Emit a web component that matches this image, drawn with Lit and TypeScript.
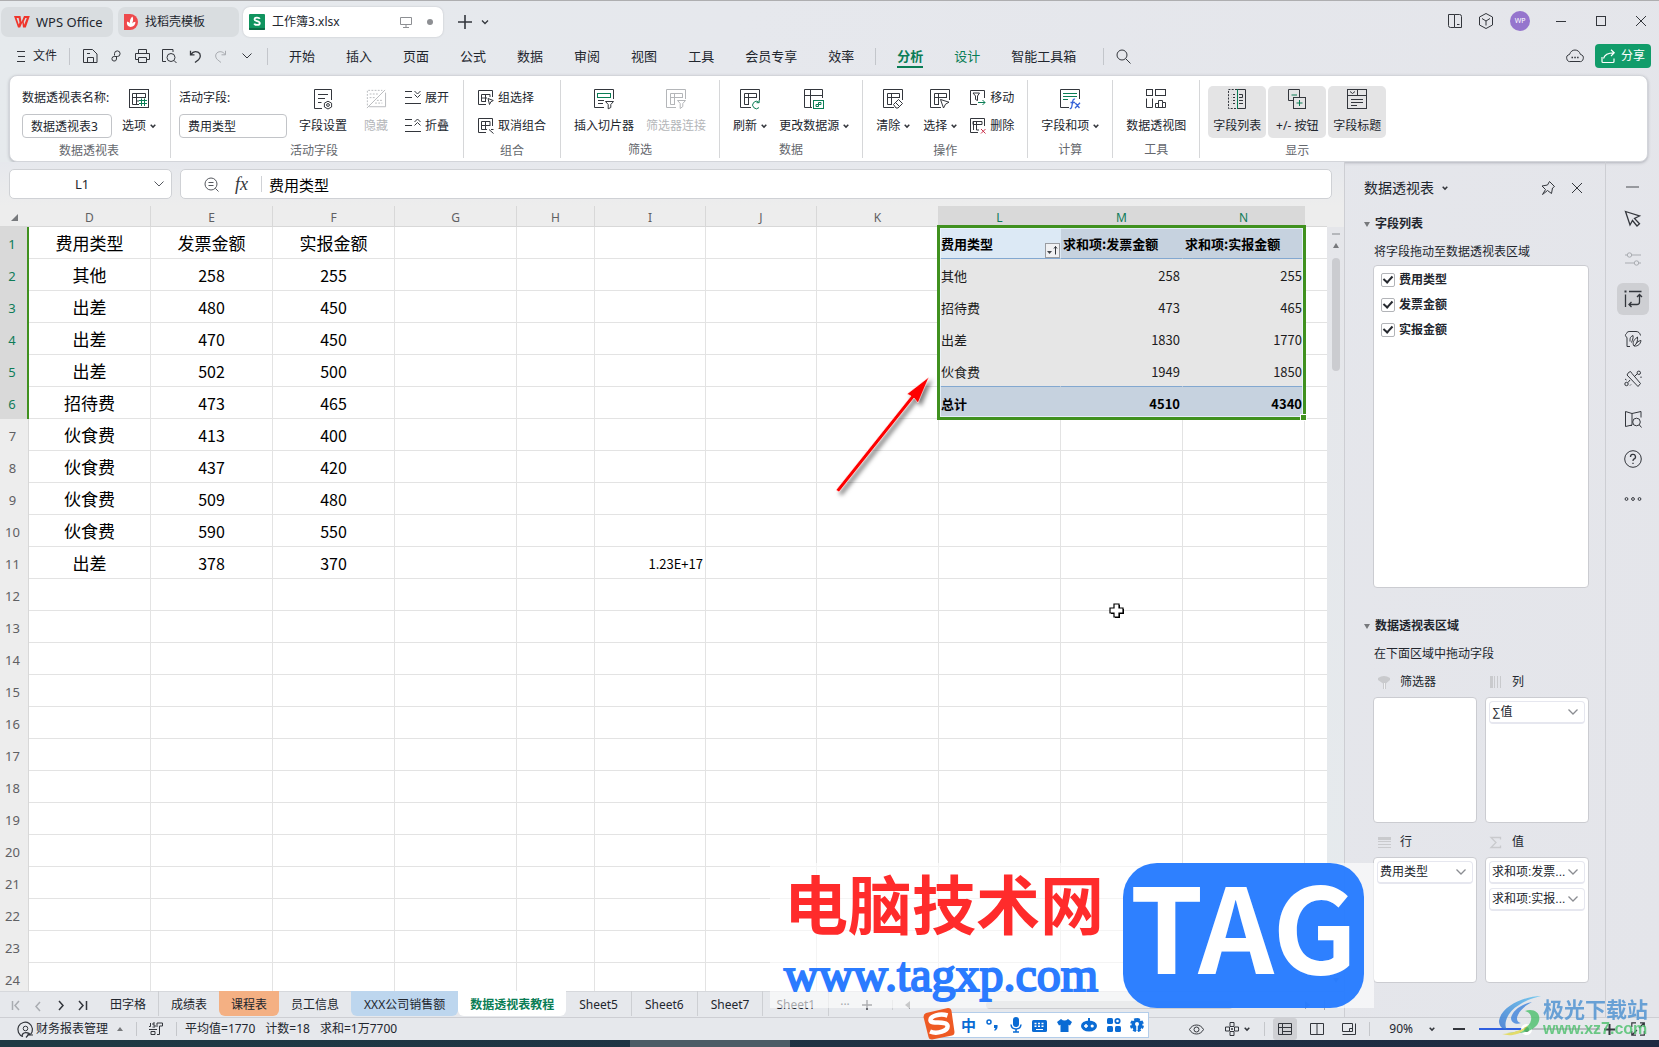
import { LitElement, html, css, svg, nothing, TemplateResult, SVGTemplateResult } from "lit";
import { customElement } from "lit/decorators.js";
import { classMap } from "lit/directives/class-map.js";

const icon = (size: number, body: SVGTemplateResult, cls = "") =>
  html`<svg class="ico ${cls}" width=${size} height=${size} viewBox="0 0 ${size} ${size}" aria-hidden="true">${body}</svg>`;

const chevron = html`<svg class="ico" width="6" height="6" viewBox="0 0 6 6" aria-hidden="true"><path d="M.7 1.8 3 4.1 5.3 1.8" stroke-width="1.5" /></svg>`;
const chevronWide = html`<svg class="ico" width="10" height="8" viewBox="0 0 10 8" aria-hidden="true"><path d="M.5 1.5 5 6 9.5 1.5" /></svg>`;

/* 20px ribbon icons */
const tableFrame = svg`<path d="M11 18.5H.5V.5H19.5V11"/><path d="M16.5 9V4.5H4.5V15.5H9M4.5 8.5H16.5M8.5 4.5V15.5"/>`;
const big = {
  options: icon(20, svg`<rect x=".5" y=".5" width="19" height="18"/><path d="M10 15.5H3.5V4.5H16.5V9M3.5 8.5H16.5M7.5 4.5V15.5M7.5 12H10"/><path class="g" d="M12.5 9.5V17M15.5 9.5V17M10 11.5H18M10 14.5H18"/>`),
  fieldSet: icon(20, svg`<path d="M9 19.5H1.5V.5H18.5V11M5 5.5H15M5 9.5H12M5 13.5H8.5"/><path d="M15 12.2 18.6 14.2V18L15 20 11.4 18V14.2Z"/><circle cx="15" cy="16" r="1.4"/>`),
  hide: icon(22, svg`<path stroke-dasharray="2 1.5" d="M1.5 18V1.5H18"/><path d="M21.5 4V19.5H3.5"/><path d="M1 21 21 1"/><path stroke-dasharray="2 1.5" d="M4 5.5H14M4 9.5H10M12 12.5H18M10 15.5H18"/>`),
  slicer: icon(20, svg`<path d="M10 18.5H.5V.5H19.5V10M4 11.5H10M4 14.5H9"/><rect class="g" x="3.5" y="4.5" width="13" height="4"/><path d="M11.5 12.5H19.5L16.8 15.5V18.5L14.2 19.8V15.5Z"/>`),
  filterLink: icon(20, svg`<path d="M10 18.5H.5V.5H19.5V10"/><path d="M16.5 9V4.5H4.5V15.5H9M4.5 8.5H16.5M8.5 4.5V15.5"/><path d="M11.5 11.5H19.5L16.8 14.5V17.5L14.2 19.5V14.5Z"/>`),
  refresh: icon(20, svg`${tableFrame}<path class="g" d="M19 18.6A3.7 3.7 0 1 1 18.8 13.2M19.2 11V13.7H16.5"/>`),
  source: icon(20, svg`<path d="M8 18.5H.5V.5H18.5V9M.5 6.5H18.5M6.5 .5V18.5"/><g class="g"><rect x="9.5" y="11.5" width="10" height="8"/><path d="M12 17.5V15.5H14.5V17.5ZM14.5 15.5V13.5H17V15.5Z"/></g>`),
  clear: icon(20, svg`${tableFrame}<path fill="#fff" d="M10.5 15.5 15.5 10.5 19.5 14.5 15 19H13Z"/><path d="M12.5 13.5 16.5 17.5"/>`),
  select: icon(20, svg`${tableFrame}<path fill="#fff" d="M10.5 10.5 19 13.2 15.5 15.2 13.5 19Z"/>`),
  fieldItem: icon(20, svg`<path d="M9 18.5H.5V.5H19.5V10"/><path class="g" d="M3 4.5H17M3 7.5H17M3 10.5H8"/><g class="b"><path d="M15 10.2C13.4 9.6 13 11 12.7 12.5L11.8 17.5C11.5 19 11 19.8 9.8 19.4M10.5 13.5H15M15.3 14 19.5 19M20 13.8 15 19.2"/></g>`),
  chart: icon(20, svg`<rect x=".5" y=".5" width="6" height="6"/><rect x="9.5" y=".5" width="10" height="6"/><path d="M6.5 9.5V18.5H.5V9.5M9.5 18.5V14.5H12.5V11.5H16.5V13.5H19.5V18.5ZM12.5 14V18.5M16.5 13.5V18.5"/>`),
  fieldList: icon(20, svg`<g stroke-dasharray="2 1.3"><path d="M10 .5H1.5V19.5H10"/><path d="M8 5.5H4.5M8 8.5H4.5M8 11.5H4.5M8 14.5H4.5"/></g><path d="M10 .5H18.5V19.5H10M12 5.5H15.5V8.5H12M12 11.5H16M12 14.5H16"/><path class="g" d="M10.5 0V20"/>`),
  plusMinus: icon(20, svg`<path d="M6 11.5H1.5V.5H12.5V8"/><rect x="6.5" y="8.5" width="12" height="11"/><path class="g" d="M4.5 6H10M12.5 11V17M9.5 14H15.5"/>`),
  fieldTitle: icon(20, svg`<rect x=".5" y=".5" width="19" height="19"/><path d="M.5 6.5H19.5M10.5 .5V6.5M3 2.5 5.5 4.5 8 2.5M4 10.5H16M4 13.5H16M4 16.5H10"/>`),
};

/* 16px ribbon icons */
const small = {
  expand: icon(16, svg`<path d="M0 1.5H7M0 7.5H7M0 13.5H16M9.5 1 12.5 4 15.5 1M9.5 4.5 12.5 7.5 15.5 4.5"/>`),
  collapse: icon(16, svg`<path d="M0 1.5H7M0 7.5H7M0 13.5H16M9.5 4 12.5 1 15.5 4M9.5 7.5 12.5 4.5 15.5 7.5"/>`),
  group: icon(16, svg`<path d="M8 14.5H.5V.5H14.5V7M3.5 4.5H12V7M3.5 4.5V11.5H8M3.5 8H9M7.5 4.5V11.5"/><path d="M10 8.5 15.3 10.5 12.8 11.8 11.5 14.5Z"/>`),
  ungroup: icon(16, svg`<path d="M8 14.5H.5V.5H14.5V8M3.5 3.5H12V8M3.5 3.5V11.5H9M3.5 7.5H12M7.5 3.5V11.5"/><path d="M11 11.5 15.5 15.5M15.5 11.5H13"/>`),
  move: icon(16, svg`<path d="M7 14.5H.5V.5H14.5V8M3 3H9.5L7.5 6V10.5L5.5 9.5V6Z"/><path class="g" d="M8 12.5H15M12.5 10 15 12.5 12.5 15"/>`),
  remove: icon(16, svg`<path d="M8 14.5H.5V.5H14.5V8M3 3.5H12V6.5H3ZM3.5 3.5V12M6.5 3.5V12H9"/><path class="r" d="M11 11 15.5 15.5M15.5 11 11 15.5"/>`),
};

const quick: [string, TemplateResult][] = [
  ["保存", icon(15, svg`<path d="M.5 13.5V.5H9.5L14 5V13.5ZM4.500 13.5V8.5H10.5V13.5M4 4.5H7"/>`)],
  ["输出", icon(13, svg`<path d="M4.5 5.5V3.5A2.8 2.8 0 1 1 7.3 6.5H4.5A2.3 2.3 0 1 0 6.5 9V6.5"/>`)],
  ["打印", icon(15, svg`<path d="M3.5 4V.5H11.5V4M3.5 10.5H.5V4.5H14.5V10.5H11.5M3.5 8.5H11.5V13.5H3.5Z"/>`)],
  ["打印预览", icon(15, svg`<path d="M4 12.5H.5V.5H11V3"/><circle cx="9" cy="8.5" r="4"/><path d="M12 11.5 14.5 14"/>`)],
  ["撤销", icon(13, svg`<path stroke-width="1.3" d="M1.5 .8V4.8H5.5M1.8 4.6C3.5 2 6.5 1 9 2.2C12.5 4 11.5 8 9.5 9.7L6 12.5"/>`)],
  ["恢复", icon(13, svg`<path d="M11.5 .8V4.8H7.5M11.2 4.6C9.5 2 6.5 1 4 2.2C.5 4 1.5 8 3.5 9.7L7 12.5"/>`, "dim")],
];

const rail: [string, TemplateResult][] = [
  ["选择", icon(18, svg`<path stroke-width="1.3" d="M1.5 1.5 15.5 6 10.5 8.5 15.5 13.8 13 16 8.5 10.5 6 15Z"/>`)],
  ["属性", icon(18, svg`<path d="M1 5H3M8 5H17M1 13H10M15 13H17"/><circle cx="5.5" cy="5" r="2.2"/><circle cx="12.5" cy="13" r="2.2"/>`, "dim")],
  ["数据透视表", icon(18, svg`<path stroke-width="1.3" d="M1.5 4.5V17M5 1.5H17.5M5 14.5H13Q15.5 14.5 15.5 12V5M13 7 15.5 4.5 18 7M7.5 12 5 14.5 7.5 17"/><path d="M.5 1.5H2.5" stroke-width="2"/>`)],
  ["模板", icon(18, svg`<path d="M6 16.5H3V7.5C1 6.500 1 4.5 2.5 3.5C3 1.5 5 1.5 6 1.5H12C14.5 1.5 16 3 16.5 5.5"/><path d="M6 11.5C6 8 6 7 9 5.5C9.5 8 8.5 10 7.5 12.5M10 16C8 13 9.5 10 13.5 7C14 10 13 14 10 16ZM10 16C14 16.5 16.5 14 17 10.5C14.5 11 13 12 12.5 13.5"/>`)],
  ["工具", icon(18, svg`<path d="M4.500 2.5 6.5 1.5 8 3.5L16.5 13.5 14 16.5 3 5Z"/><path d="M10.5 6.5 13 4M6 10 4 12.5"/><circle cx="14.8" cy="2.8" r="1.7"/><circle cx="2.5" cy="14" r="1.7"/><path d="M1 9 2.5 10M6 15.5 7 14.5M17 6.5V8"/>`)],
  ["查找", icon(18, svg`<path d="M8 3.5V15L1.5 16.5V1.5L8 3.5 17 1.5V7.5M8 15.5H6"/><circle cx="12.5" cy="12" r="3.8"/><path d="M15.3 14.8 17.5 17.5"/>`)],
  ["帮助", icon(18, svg`<circle cx="9" cy="9" r="8.3"/><path stroke-width="1.3" d="M6.5 7A2.500 2.500 0 1 1 9.8 9.2Q9 9.6 9 11M9 12.7V14"/>`)],
  ["更多", icon(18, svg`<circle cx="2.500" cy="9" r="1.400"/><circle cx="9" cy="9" r="1.400"/><circle cx="15.500" cy="9" r="1.400"/>`)],
];

const columns = ["D", "E", "F", "G", "H", "I", "J", "K", "L", "M", "N", ""];

const source: [string, string, string][] = [
  ["费用类型", "发票金额", "实报金额"],
  ["其他", "258", "255"],
  ["出差", "480", "450"],
  ["出差", "470", "450"],
  ["出差", "502", "500"],
  ["招待费", "473", "465"],
  ["伙食费", "413", "400"],
  ["伙食费", "437", "420"],
  ["伙食费", "509", "480"],
  ["伙食费", "590", "550"],
  ["出差", "378", "370"],
];

const pivot: [string, string, string][] = [
  ["费用类型", "求和项:发票金额", "求和项:实报金额"],
  ["其他", "258", "255"],
  ["招待费", "473", "465"],
  ["出差", "1830", "1770"],
  ["伙食费", "1949", "1850"],
  ["总计", "4510", "4340"],
];

const menuMain = ["开始", "插入", "页面", "公式", "数据", "审阅", "视图", "工具", "会员专享", "效率"];

const sheets: [string, string][] = [
  ["田字格", "line"],
  ["成绩表", ""],
  ["课程表", "orange"],
  ["员工信息", ""],
  ["XXX公司销售额", "blue roomy"],
  ["数据透视表教程", "active"],
  ["Sheet5", "line roomy"],
  ["Sheet6", "line roomy"],
  ["Sheet7", "line roomy"],
  ["Sheet1", "line roomy"],
];

const shared = css`
  * { box-sizing: border-box; }
  :host { font-family: "Noto Sans", "Noto Sans CJK SC", sans-serif; font-size: 12px; line-height: 16px; color: #22262e; }
  button, input { font: inherit; color: inherit; margin: 0; }
  button { border: 0; background: none; padding: 0; display: inline-flex; align-items: center; justify-content: center; white-space: nowrap; }
  a { color: inherit; text-decoration: none; }
  .ico { display: block; flex: none; fill: none; stroke: #33363c; stroke-width: 1; overflow: visible; }
  .ico .g { stroke: #0a7d55; }
  .ico .b { stroke: #3763d8; stroke-width: 1.3; }
  .ico .r { stroke: #c9304a; }
  .dim { stroke: #a9acb1; }
`;

@customElement("title-bar")
class TitleBar extends LitElement {
  static styles = [shared, css`
    :host { display: flex; align-items: flex-start; border-top: 1px solid #aeaeb0; height: 39px; padding: 6px 12px 0 1px; }
    .tab { height: 30px; border-radius: 7px; background: #d9dde0; display: flex; align-items: center; justify-content: flex-start; font-size: 12px; }
    .home { width: 112px; padding-left: 13px; gap: 6px; margin-right: 5px; font-size: 13px; }
    .docer { width: 121px; padding-left: 6px; gap: 7px; margin-right: 4px; }
    .book { width: 200px; padding: 0 10px 0 6px; gap: 7px; background: #fff; box-shadow: 0 0 2px #b9bcc2; }
    .grow { flex: 1; text-align: left; }
    .dot { width: 6px; height: 6px; border-radius: 3px; background: #8d8f93; margin-left: 8px; }
    .add { margin-left: 15px; height: 30px; gap: 9px; display: flex; align-items: center; }
    .right { margin-left: auto; display: flex; align-items: center; gap: 16px; height: 28px; }
    .avatar { width: 20px; height: 20px; border-radius: 10px; background: #9575cd; color: #fff; font-size: 7px; }
    .win { display: flex; gap: 28px; margin-left: 9px; }
  `];
  render() {
    return html`
      <button class="tab home">
        <svg class="ico" width="16" height="12" viewBox="0 0 16 12" aria-hidden="true"><path fill="#f0352b" stroke="none" d="M0 0H6.500L7.500 6 10 0H15.800L11.800 11.500H9L8.300 6.500 6.200 11.500H4ZM2.600 2 4.800 8.500 5.500 6.500 4.600 2ZM11.300 2 9.700 5.800 10.200 8.800 12.800 2Z"/></svg>
        WPS Office</button>
      <button class="tab docer">
        <svg class="ico" width="14" height="16" viewBox="0 0 14 16" aria-hidden="true"><path fill="#ee4a4d" stroke="none" d="M0 0H6A8 8 0 0 1 6 16H0Z"/><path fill="#fff" stroke="none" d="M6.5 13C3.5 12.5 2.5 10.5 3 7.5C4.5 8 5.5 8.5 6 9.5C5.5 6.5 6.5 4 8.5 2.5C9.5 5 9.3 7 8 9.5C9 8.5 9.8 8 11.5 7.8C11.5 10.8 9.5 12.8 6.5 13Z"/></svg>
        <span class="grow">找稻壳模板</span></button>
      <button class="tab book">
        <svg class="ico" width="16" height="16" viewBox="0 0 16 16" aria-hidden="true"><rect width="16" height="16" rx="1" fill="#10945f" stroke="none"/><path d="M0 14H16V15A1 1 0 0 1 15 16H1A1 1 0 0 1 0 15Z" fill="#0b6b45" stroke="none"/><path stroke="#fff" stroke-width="1.8" d="M10.8 4.8C10 3.2 5.5 3 5.5 5.3C5.5 7.6 10.8 6.6 10.8 9.2C10.8 11.4 6 11.5 5.2 9.6"/></svg>
        <span class="grow">工作簿3.xlsx</span>
        <svg class="ico dim" width="12" height="12" viewBox="0 0 12 12" aria-hidden="true"><path stroke="#8d8f93" d="M.5 1.5H11.500V8.5H.5ZM3 11.5H9M6 8.5V11.5"/></svg>
        <span class="dot"></span></button>
      <div class="add">
        <button aria-label="新建">${icon(14, svg`<path stroke-width="1.6" d="M7 0V14M0 7H14"/>`)}</button>
        <button aria-label="更多">${icon(8, svg`<path stroke-width="1.3" d="M1 2.5 4 5.5 7 2.5"/>`)}</button>
      </div>
      <div class="right">
        <button aria-label="并排">${icon(14, svg`<path d="M6.500 13.5H2.500A2 2 0 0 1 .5 11.500V.5H6.500ZM6.500 .5H11.500A2 2 0 0 1 13.500 2.500V13.500H6.500M9 10.500H11.500"/>`)}</button>
        <button aria-label="组件">${icon(16, svg`<path d="M8 .5 14.5 4V12L8 15.5 1.5 12V4ZM4 5.5 8 8 12 5.5M8 8V12.5"/>`)}</button>
        <button class="avatar">WP</button>
        <div class="win">
          <button aria-label="最小化">${icon(12, svg`<path d="M1 6.5H11"/>`)}</button>
          <button aria-label="最大化">${icon(12, svg`<rect x="1.5" y="1.5" width="9" height="9"/>`)}</button>
          <button aria-label="关闭">${icon(12, svg`<path d="M1 1 11 11M11 1 1 11"/>`)}</button>
        </div>
      </div>`;
  }
}

@customElement("menu-bar")
class MenuBar extends LitElement {
  static styles = [shared, css`
    :host { display: flex; align-items: center; height: 34px; padding: 0 8px 0 17px; font-size: 13px; }
    .file { gap: 8px; font-size: 12px; }
    .sep { width: 1px; height: 17px; background: #c3c6cb; }
    .quick { display: flex; align-items: center; gap: 12px; margin: 0 15px 0 13px; }
    .custom { margin-left: 3px; }
    .file + .sep { margin-left: 12px; }
    nav { display: flex; gap: 31px; margin: 0 21px; }
    nav a { display: block; line-height: 20px; border-bottom: 2px solid transparent; border-top: 2px solid transparent; }
    .tail { margin-right: 27px; }
    nav .on { color: #0a7d55; font-weight: 700; border-bottom-color: #0a7d55; }
    .green { color: #0a7d55; }
    .find { margin-left: 12px; }
    .cloud { margin-left: auto; }
    .share { margin-left: 12px; width: 56px; height: 24px; border-radius: 4px; background: #119c6a; color: #fff; gap: 5px; font-size: 12px; }
    .share .ico { stroke: #fff; }
  `];
  render() {
    return html`
      <button class="file">${icon(8, svg`<path d="M0 -.5H8M1 4.500H8M0 9.500H8"/>`)}文件</button>
      <span class="sep"></span>
      <div class="quick">
        ${quick.map(([name, g]) => html`<button aria-label=${name}>${g}</button>`)}
        <button class="custom" aria-label="自定义">${chevronWide}</button>
      </div>
      <span class="sep"></span>
      <nav>${menuMain.map((m) => html`<a href="#">${m}</a>`)}</nav>
      <span class="sep"></span>
      <nav class="tail"><a class="on" href="#">分析</a><a class="green" href="#">设计</a><a href="#">智能工具箱</a></nav>
      <span class="sep"></span>
      <button class="find" aria-label="搜索">${icon(15, svg`<circle cx="6" cy="6" r="5"/><path d="M9.8 9.8 14.5 14.5"/>`)}</button>
      <button class="cloud" aria-label="云同步">${icon(16, svg`<path d="M4 13.5A3.5 3.5 0 0 1 2.5 6.5C3.5 3.5 5.5 2 8 2S12.5 3.5 13.5 6.5A3.5 3.5 0 0 1 12 13.5Z"/><path stroke-width="1.5" d="M4.5 9.5H6M7.3 9.5H8.8M10.1 9.5H11.6"/>`)}</button>
      <button class="share">${icon(15, svg`<path stroke-width="1.2" d="M1 8V12.5Q1 13.5 2 13.5H12Q13 13.5 13 12.5V9.5M2.5 9.5C3.5 5.5 6.5 3.8 13 3.8M10 .8 13.2 3.8 10 7"/>`)}分享</button>`;
  }
}

@customElement("ribbon-bar")
class RibbonBar extends LitElement {
  static styles = [shared, css`
    :host { display: flex; height: 87px; margin: 2px 11px 0 9px; padding: 4px 0 3px; background: #fff; border: 1px solid #d3d5da; border-radius: 8px; box-shadow: 0 1px 3px rgba(60, 64, 75, .3); }
    .group { display: flex; flex-direction: column; align-items: center; padding: 6px 13px 0; border-right: 1px solid #d6d7d9; }
    .group:first-child { padding: 6px 14px 0 12px; }
    .wide { padding: 6px 14px 0 8px; }
    .even { padding: 6px 14px 0; }
    .last { padding: 6px 8px 0; border: 0; }
    .items { display: flex; gap: 13px; height: 52px; }
    .g10 { gap: 10px; }
    .g12 { gap: 12px; }
    .g2 { gap: 2px; }
    .fields { gap: 17px; }
    .caption { line-height: 16px; margin-top: 5px; color: #64676d; }
    .stack { display: grid; grid-template-rows: 24px 24px; gap: 4px; align-items: center; justify-items: start; }
    .stack input { height: 24px; border: 1px solid #c2c4c8; border-radius: 4px; padding: 0 8px; background: #fff; outline: 0; }
    .short { width: 90px; }
    .long { width: 108px; }
    .row { gap: 4px; }
    .big { flex-direction: column; justify-content: flex-start; padding-top: 3px; gap: 9px; }
    .big .ico { height: 20px; }
    .big .label { display: flex; align-items: center; gap: 4px; }
    .big .label .ico { height: 6px; }
    .down { background: #e4e4e5; border-radius: 5px; height: 52px; min-width: 58px; padding: 3px 5px 0; }
    .off { color: #b4b6b9; }
    .off .ico { stroke: #b4b6b9; }
  `];
  private big(g: TemplateResult, label: string, drop = false, cls = "") {
    return html`<button class="big ${cls}" ?disabled=${cls === "off"}>${g}<span class="label">${label}${drop ? chevron : nothing}</span></button>`;
  }
  private row(g: TemplateResult, label: string) {
    return html`<button class="row">${g}${label}</button>`;
  }
  render() {
    return html`
      <div class="group">
        <div class="items g10">
          <div class="stack"><label for="pt-name">数据透视表名称:</label><input id="pt-name" class="short" value="数据透视表3" /></div>
          ${this.big(big.options, "选项", true)}
        </div>
        <div class="caption">数据透视表</div>
      </div>
      <div class="group wide">
        <div class="items fields">
          <div class="items g12">
            <div class="stack"><label for="active-field">活动字段:</label><input id="active-field" class="long" value="费用类型" /></div>
            ${this.big(big.fieldSet, "字段设置")}
          </div>
          ${this.big(big.hide, "隐藏", false, "off")}
          <div class="stack">${this.row(small.expand, "展开")}${this.row(small.collapse, "折叠")}</div>
        </div>
        <div class="caption">活动字段</div>
      </div>
      <div class="group even">
        <div class="items"><div class="stack">${this.row(small.group, "组选择")}${this.row(small.ungroup, "取消组合")}</div></div>
        <div class="caption">组合</div>
      </div>
      <div class="group">
        <div class="items g12">${this.big(big.slicer, "插入切片器")}${this.big(big.filterLink, "筛选器连接", false, "off")}</div>
        <div class="caption">筛选</div>
      </div>
      <div class="group">
        <div class="items g12">${this.big(big.refresh, "刷新", true)}${this.big(big.source, "更改数据源", true)}</div>
        <div class="caption">数据</div>
      </div>
      <div class="group">
        <div class="items">${this.big(big.clear, "清除", true)}${this.big(big.select, "选择", true)}
          <div class="stack">${this.row(small.move, "移动")}${this.row(small.remove, "删除")}</div>
        </div>
        <div class="caption">操作</div>
      </div>
      <div class="group">
        <div class="items">${this.big(big.fieldItem, "字段和项", true)}</div>
        <div class="caption">计算</div>
      </div>
      <div class="group">
        <div class="items">${this.big(big.chart, "数据透视图")}</div>
        <div class="caption">工具</div>
      </div>
      <div class="group last">
        <div class="items g2">${this.big(big.fieldList, "字段列表", false, "down")}${this.big(big.plusMinus, "+/- 按钮", false, "down")}${this.big(big.fieldTitle, "字段标题", false, "down")}</div>
        <div class="caption">显示</div>
      </div>`;
  }
}

@customElement("formula-bar")
class FormulaBar extends LitElement {
  static styles = [shared, css`
    :host { display: flex; gap: 8px; padding: 7px 12px 7px 9px; background: linear-gradient(#e6e8ed, #ededed); }
    .box { height: 30px; background: #fff; border: 1px solid #cfd1d5; border-radius: 5px; display: flex; align-items: center; }
    .name { width: 163px; padding-right: 7px; }
    .formula { flex: 1; padding-left: 23px; }
    input { border: 0; outline: 0; background: none; min-width: 0; flex: 1; }
    .name input { text-align: center; padding: 0; font-size: 13px; }
    .formula input { font-size: 15px; color: #000; padding: 0 0 0 7px; height: 28px; }
    .fx { font-family: "Liberation Serif", serif; font-style: italic; font-size: 18px; margin: 0 13px 0 16px; color: #33363c; }
    .sep { width: 1px; height: 16px; background: #d0d2d6; }
    .ico { stroke: #55585e; }
  `];
  render() {
    return html`
      <div class="box name"><input aria-label="名称框" value="L1" /><button aria-label="展开名称框">${chevronWide}</button></div>
      <div class="box formula">
        <button aria-label="缩小">${icon(15, svg`<circle cx="7" cy="7" r="6"/><path d="M4.5 5.5H9.5M4.5 8.5H9.5M11.3 11.3 14.5 14.5"/>`)}</button>
        <button class="fx" aria-label="插入函数">fx</button>
        <span class="sep"></span>
        <input aria-label="编辑栏" value="费用类型" />
      </div>`;
  }
}

@customElement("sheet-grid")
class SheetGrid extends LitElement {
  static styles = [shared, css`
    :host { display: flex; flex: 1; min-height: 0; position: relative; overflow: hidden; background: #fff; }
    table { border-collapse: separate; border-spacing: 0; table-layout: fixed; width: 100%; }
    .wrap { flex: 1; min-width: 0; overflow: hidden; }
    .c0 { width: 29px; }
    .c1 { width: 122px; }
    .c2 { width: 78px; }
    .c3 { width: 111px; }
    th, td { padding: 0; font-weight: 400; white-space: nowrap; }
    thead th { height: 21px; line-height: 17px; background: #ededed; color: #5f6063; border-right: 1px solid #d8d8d8; border-bottom: 1px solid #d8d8d8; padding-top: 3px; }
    thead th.end { border-right: 0; }
    thead th.hot { background: #d9d9d9; border-right-color: #d9d9d9; color: #0e7c58; }
    tbody tr { height: 32px; }
    tbody th { background: #ededed; color: #5f6063; border-right: 1px solid #d8d8d8; padding: 2px 3px 0 0; font-size: 13px; }
    tbody th.hot { background: #d9d9d9; color: #0e7c58; border-right: 2px solid #40911f; }
    td { height: 32px; border-right: 1px solid #e3e3e3; border-bottom: 1px solid #e3e3e3; color: #000; font-family: "Noto Sans CJK SC", sans-serif; text-align: center; font-size: 17px; line-height: 24px; }
    td.end { border-right: 0; }
    td.num { font-size: 16px; }
    td.small { font-size: 13px; text-align: right; padding: 2px 2px 0 0; }
    td.pv { font-size: 13px; text-align: right; background: #e6e6e6; border-color: #e6e6e6; padding: 2px 2px 0 2px; color: #1c1c1c; }
    td.pv.key { text-align: left; }
    td.pv.head { background: #c6d2df; border-color: #c6d2df; border-bottom-color: #83a8d0; font-weight: 700; text-align: left; color: #000; }
    td.pv.head.key { background: #dce9f5; border-right-color: #dce9f5; }
    td.pv.foot { background: #c6d2df; border-color: #c6d2df; font-weight: 700; color: #000; }
    td.pv.line { border-bottom-color: #83a8d0; }
    .corner { display: block; margin: 0 0 0 11px; width: 0; height: 0; border-left: 7px solid transparent; border-bottom: 7px solid #77797c; }
    .bar { width: 17px; flex: none; background: linear-gradient(#e5e6ea, #e6ebee); display: flex; flex-direction: column; align-items: center; border-top: 21px solid #ededed; }
    .dash { width: 8px; height: 2px; background: #b5b7bb; margin-top: 6px; }
    .up { border: 3px solid transparent; border-bottom: 5px solid #77797c; border-top: 0; margin-top: 8px; }
    .thumb { width: 8px; height: 113px; border-radius: 4px; background: #cbccd0; margin-top: 10px; }
    .down { border: 3px solid transparent; border-top: 5px solid #77797c; border-bottom: 0; margin: auto 0 8px; }
    .sel { position: absolute; left: 937px; top: 19px; width: 369px; height: 195px; border: 3px solid #40911f; box-shadow: inset 0 0 0 1px rgba(235, 245, 255, .8); }
    .sel i { position: absolute; right: -4px; bottom: -4px; width: 7px; height: 7px; background: #40911f; border: 1px solid #fff; }
    .sort { position: absolute; left: 1045px; top: 37px; width: 15px; height: 15px; background: #f0f1f3; border: 1px solid #999ca1; }
    .arrow { position: absolute; left: 829px; top: 164px; filter: drop-shadow(3px 3px 2px rgba(0, 0, 0, .5)); }
    .cross { position: absolute; left: 1109px; top: 397px; }
  `];
  private cells(r: number) {
    const out: TemplateResult[] = [];
    for (let c = 0; c < 12; c++) {
      if (c < 3 && r < source.length) {
        out.push(html`<td class=${classMap({ num: r > 0 && c > 0 })}>${source[r][c]}</td>`);
      } else if (c >= 8 && c < 11 && r < pivot.length) {
        out.push(html`<td class=${classMap({ pv: true, key: c === 8, head: r === 0, foot: r === 5, line: r === 4 })}>${pivot[r][c - 8]}</td>`);
      } else if (c === 5 && r === 10) {
        out.push(html`<td class="small">1.23E+17</td>`);
      } else {
        out.push(html`<td class=${classMap({ end: c === 11 })}></td>`);
      }
    }
    return out;
  }
  render() {
    const widths = ["c0", "c1", "c1", "c1", "c1", "c2", "c3", "c3", "c1", "c1", "c1", "c1", ""];
    return html`
      <div class="wrap"><table>
        <colgroup>${widths.map((w) => html`<col class=${w} />`)}</colgroup>
        <thead><tr>
          <th class="end"><span class="corner"></span></th>
          ${columns.map((c, i) => html`<th class=${classMap({ hot: i >= 8 && i < 11, end: i === 11 })}>${c}</th>`)}
        </tr></thead>
        <tbody>${Array.from({ length: 24 }, (_, r) => html`<tr><th class=${classMap({ hot: r < 6 })}>${r + 1}</th>${this.cells(r)}</tr>`)}</tbody>
      </table></div>
      <div class="bar"><span class="dash"></span><span class="up"></span><span class="thumb"></span><span class="down"></span></div>
      <div class="sel"><i></i></div>
      <button class="sort" aria-label="筛选">${icon(13, svg`<path fill="#44474c" stroke="none" d="M1 7H6L3.5 10Z"/><path d="M9.5 10.5V2.5M8 4.5 9.5 2.5 11 4.5"/>`)}</button>
      <svg class="arrow" width="104" height="128" viewBox="0 0 104 128" aria-hidden="true"><path fill="#fe0000" stroke="#fff" stroke-width=".6" d="M100 7 89 33 85 28 10 122 7 120 82 26 78 24Z"/></svg>
      <svg class="cross" width="16" height="16" viewBox="0 0 16 16" aria-hidden="true"><path d="M6 2H11V6H15V11H11V15H6V11H2V6H6Z" fill="#000"/><path d="M5 1H10V5H14V10H10V14H5V10H1V5H5Z" fill="#fff" stroke="#000" stroke-width="1.2"/></svg>`;
  }
}

@customElement("sheet-tabs")
class SheetTabs extends LitElement {
  static styles = [shared, css`
    :host { display: flex; align-items: stretch; height: 26px; border-top: 1px solid #d6d8dc; background: #e6e8ec; }
    .nav { display: flex; align-items: center; gap: 15px; padding: 0 11px 0 12px; }
    .nav .ico { stroke-width: 1.5; }
    .tab { padding: 2px 12px 0; height: 25px; margin-top: -1px; border-radius: 0 0 6px 6px; }
    .roomy { padding: 2px 13px 0; }
    .line { border-right: 1px solid #cdcfd3; border-radius: 0; }
    .orange { background: #f4b083; }
    .blue { background: #bdd6ee; }
    .active { background: #fff; color: #0a7d55; font-weight: 700; }
    .more { display: flex; align-items: center; gap: 12px; padding-left: 11px; }
    .more .line { height: 10px; margin-left: 8px; }
    .tri { border: 4px solid transparent; border-right: 5px solid #77797c; border-left: 0; align-self: center; }
    .tri.r { border-left: 5px solid #77797c; border-right: 0; }
    .track { flex: 1; display: flex; align-items: center; padding: 0 72px 0 76px; }
    .thumb { flex: 1; height: 8px; border-radius: 4px; background: #cbccd0; }
    .stop { width: 1px; height: 10px; background: #a5a7ab; align-self: center; margin: 0 19px 0 14px; }
  `];
  render() {
    return html`
      <div class="nav">
        <button aria-label="第一个">${icon(8, svg`<path d="M.5 0V9M7 0 3 4.5 7 9"/>`, "dim")}</button>
        <button aria-label="上一个">${icon(6, svg`<path d="M5 0 1 4.500 5 9"/>`, "dim")}</button>
        <button aria-label="下一个">${icon(8, svg`<path d="M3 0 7 4.500 3 9"/>`)}</button>
        <button aria-label="最后一个">${icon(8, svg`<path d="M0 0 4 4.500 0 9M7.5 0V9"/>`)}</button>
      </div>
      ${sheets.map(([name, cls]) => html`<button class="tab ${cls}">${name}</button>`)}
      <div class="more"><button aria-label="更多工作表">···</button><button aria-label="新建工作表">${icon(10, svg`<path stroke-width="1.4" d="M5 0V10M0 5H10"/>`)}</button><span class="line"></span><span class="tri"></span></div>
      <div class="track"><span class="thumb"></span></div>
      <span class="tri r"></span><span class="stop"></span>`;
  }
}

@customElement("pivot-panel")
class PivotPanel extends LitElement {
  static styles = [shared, css`
    :host { display: flex; flex-direction: column; width: 262px; flex: none; border-left: 1px solid #cdced3; border-right: 1px solid #cdced3; padding: 16px 16px 33px 19px; }
    .title { display: flex; align-items: center; font-size: 14px; line-height: 20px; gap: 8px; }
    .title .pin { margin-left: auto; }
    .title .pin + button { margin-left: 7px; margin-right: 7px; }
    h3 { margin: 0; font-size: 12px; line-height: 16px; display: flex; align-items: center; gap: 5px; }
    h3::before { content: ""; border: 3px solid transparent; border-top: 5px solid #77797c; border-bottom: 0; }
    .first { margin-top: 18px; }
    p { margin: 12px 0 0 10px; }
    .box { background: #fff; border: 1px solid #cbccd1; border-radius: 4px; }
    .list { margin: 5px 0 30px 9px; height: 323px; padding: 1px 7px; }
    label { display: flex; align-items: center; gap: 4px; height: 25px; font-weight: 700; }
    input { appearance: none; width: 14px; height: 14px; border: 1px solid #b2b4b8; border-radius: 2px; display: grid; place-items: center; background: #fff; }
    input:checked::before { content: ""; width: 4px; height: 7px; border: solid #26292f; border-width: 0 2px 2px 0; transform: translateY(-1px) rotate(42deg); }
    .areas { display: grid; grid-template-columns: 1fr 1fr; gap: 0 8px; margin: 10px 0 0 9px; }
    .name { display: flex; align-items: center; height: 20px; padding-left: 5px; gap: 9px; margin-bottom: 5px; }
    .area .box { height: 126px; padding: 3px; display: grid; gap: 4px; align-content: start; }
    .area:nth-child(n + 3) { margin-top: 9px; }
    .chip { height: 23px; border: 1px solid #e6e7ef; border-width: 1px 1px 2px; border-radius: 4px; padding: 0 6px 0 2px; justify-content: space-between; background: #fff; min-width: 0; font-family: "Liberation Sans", "Noto Sans CJK SC", sans-serif; }
    .chip .ico { stroke: #8b8d92; stroke-width: 1.3; }
    .soft { stroke: #c9cacd; }
  `];
  private area(g: SVGTemplateResult, name: string, chips: string[]) {
    return html`<div class="area"><div class="name">${icon(13, g, "soft")}${name}</div>
      <div class="box">${chips.map((c) => html`<button class="chip"><span>${c}</span>${chevronWide}</button>`)}</div></div>`;
  }
  render() {
    return html`
      <div class="title">数据透视表 ${chevron}
        <button class="pin" aria-label="固定">${icon(18, svg`<path d="M10.500 2.500 15.500 7.500 13.500 9 12.500 14.500 8.500 11.500 3.500 15.500 6.500 10.500 3 7 8.500 6Z"/>`)}</button>
        <button aria-label="关闭">${icon(10, svg`<path d="M0 0 10 10M10 0 0 10"/>`)}</button>
      </div>
      <h3 class="first">字段列表</h3>
      <p>将字段拖动至数据透视表区域</p>
      <div class="box list">
        ${["费用类型", "发票金额", "实报金额"].map((f) => html`<label><input type="checkbox" checked />${f}</label>`)}
      </div>
      <h3>数据透视表区域</h3>
      <p>在下面区域中拖动字段</p>
      <div class="areas">
        ${this.area(svg`<path fill="#c9cacd" stroke="none" d="M0 2Q6 -2 12 2V4L8 7.5V13H5V7.5L0 4Z"/><path stroke="#f2f2f4" d="M6.5 7V13"/>`, "筛选器", [])}
        ${this.area(svg`<path stroke-width="3" d="M1.5 0V12"/><path d="M4.5 0V12M7.5 0V12M10.5 0V12"/>`, "列", ["∑值"])}
        ${this.area(svg`<path stroke-width="3" d="M0 2.5H13"/><path d="M0 5.5H13M0 8.5H13M0 11.5H13"/>`, "行", ["费用类型"])}
        ${this.area(svg`<path stroke-width="1.3" d="M10.5 3.5V1.5H1L6 6.5 1 11.5H10.5V9.5"/>`, "值", ["求和项:发票...", "求和项:实报..."])}
      </div>`;
  }
}

@customElement("side-rail")
class SideRail extends LitElement {
  static styles = [shared, css`
    :host { display: flex; flex-direction: column; align-items: center; width: 53px; flex: none; padding-top: 24px; gap: 8px; }
    .min { height: 2px; width: 13px; background: #97999e; margin-bottom: 7px; }
    .tool { width: 32px; height: 32px; border-radius: 6px; }
    .on { background: #cecfd3; }
  `];
  render() {
    return html`<button class="min" aria-label="收起"></button>
      ${rail.map(([name, g], i) => html`<button class="tool ${i === 2 ? "on" : ""}" aria-label=${name}>${g}</button>`)}`;
  }
}

@customElement("status-bar")
class StatusBar extends LitElement {
  static styles = [shared, css`
    :host { display: flex; align-items: center; height: 23px; border-top: 1px solid #cdced3; padding: 0 14px 0 17px; background: #e6e8ec; }
    .sep { width: 1px; height: 14px; background: #c5c7cb; margin: 0 12px 0 13px; }
    .near { margin-right: 8px; }
    .acct { gap: 2px; }
    .tri { border: 3px solid transparent; border-bottom: 4px solid #77797c; border-top: 0; margin-left: 7px; }
    .sum { display: flex; gap: 10px; }
    .right { margin-left: auto; display: flex; align-items: center; height: 22px; }
    .eye { margin-right: 21px; }
    .mode { gap: 5px; }
    .view { width: 24px; height: 22px; margin-right: 8px; }
    .on { background: #cfd0d4; border-radius: 3px; }
    .right .sep { margin: 0 8px 0 14px; }
    .right .tight { margin: 0 19px 0 0; }
    .zoom { gap: 16px; }
    .minus { margin-left: 18px; }
    input { appearance: none; width: 121px; height: 12px; background: linear-gradient(#2f5fe0, #2f5fe0) 0 50% / 39% 2px no-repeat, linear-gradient(#b9bbc0, #b9bbc0) 0 50% / 100% 2px no-repeat; margin: 0 4px 0 14px; }
    input::-webkit-slider-thumb { appearance: none; width: 11px; height: 11px; border-radius: 6px; border: 3px solid #fff; background: #5c7a58; }
    .full { margin-left: 16px; }
  `];
  render() {
    return html`
      <button class="acct">${icon(17, svg`<path stroke-width="1.2" d="M6 15.5A7.3 7.3 0 1 1 13.5 13.5"/><circle cx="8.5" cy="7.5" r="2.3"/><path stroke-width="1.2" d="M5 15.5C5 10.5 12 10.5 13.5 14.5M9 16.5 12.5 12.5M10 14H16"/>`)}财务报表管理<span class="tri"></span></button>
      <span class="sep"></span>
      <button aria-label="宏">${icon(14, svg`<path d="M1.5 1V4.5H0M6 1H4V3H6V5H3.5M8 1V5M8 1H13.5V4H10.5V12.5H8M0 7.5H8M2 12.5V9.5H6V12.5Z"/>`)}</button>
      <span class="sep near"></span>
      <div class="sum"><span>平均值=1770</span><span>计数=18</span><span>求和=1万7700</span></div>
      <div class="right">
        <button class="eye" aria-label="护眼">${icon(15, svg`<path d="M.5 7.5C3.5 1.5 11.5 1.5 14.5 7.5C11.5 13.5 3.5 13.5 .5 7.5Z"/><circle cx="7.5" cy="7.5" r="2.5"/>`)}</button>
        <button class="mode" aria-label="阅读模式">${icon(14, svg`<path d="M5 .5H9V4.500H5ZM5 9.5H9V13.5H5ZM4.5 5H.5V9H4.5ZM9.5 5H13.5V9H9.5ZM7 6V8M6 7H8"/>`)}${chevron}</button>
        <span class="sep"></span>
        <button class="view on" aria-label="普通视图">${icon(14, svg`<path d="M.5 1.500H13.500V12.500H.5ZM.5 5.500H13.500M4.500 1.500V12.500M4.500 9.500H13.500"/>`)}</button>
        <button class="view" aria-label="页面布局">${icon(14, svg`<path d="M.5 1.5H13.5V12.5H.5ZM7 1.5V12.5"/>`)}</button>
        <button class="view" aria-label="分页预览">${icon(14, svg`<path d="M.5 1.500H10.5V9.500H.5ZM13.500 1.500V12.5H.5M7.500 9.500V6.500H10.500"/>`)}</button>
        <span class="sep tight"></span>
        <button class="zoom">90%${chevron}</button>
        <button class="minus" aria-label="缩小">${icon(12, svg`<path stroke-width="2" d="M0 6H12"/>`)}</button>
        <input type="range" aria-label="缩放" min="0" max="100" value="38" />
        <button aria-label="放大">${icon(11, svg`<path stroke-width="2" d="M5.5 0V11M0 5.5H11"/>`)}</button>
        <button class="full" aria-label="全屏">${icon(14, svg`<path stroke-width="1.2" d="M9 .8H13.3V5M8 6 13 1M5 .8H.8V5M.8 9V13.2H5M6 8 1 13M13.3 9V13.2H9"/>`)}</button>
      </div>`;
  }
}

@customElement("ime-bar")
class ImeBar extends LitElement {
  static styles = [shared, css`
    :host { display: flex; align-items: center; height: 26px; width: 215px; padding: 0 4px 0 26px; justify-content: space-between; background: #fff; border: 1px solid #b3cdea; position: relative; }
    .logo { position: absolute; left: -12px; top: -5px; }
    .ico { fill: #0a6bd4; stroke: none; }
    .zh { color: #0a6bd4; font-size: 15px; font-weight: 700; line-height: 20px; }
    .k { stroke: #fff; }
  `];
  render() {
    return html`
      <svg class="logo" width="32" height="32" viewBox="0 0 32 32" aria-hidden="true"><path fill="#ee5a24" d="M3 5 25 0Q28 0 28.5 3L31.5 24Q31.5 27 29 27.5L9 31.5Q6 31.5 5.5 29L.5 9Q.5 6 3 5Z"/><path fill="none" stroke="#fff" stroke-width="4.5" d="M24.5 7.5C17 5 7 8 7.5 12.5C8 16.5 23.5 12.5 24.5 17.5C25.5 23 14 26.5 7 23.5"/></svg>
      <button class="zh">中</button>
      <button aria-label="标点">${icon(14, svg`<circle cx="4" cy="4" r="2" fill="none" stroke="#0a6bd4" stroke-width="1.5"/><path d="M9 7H12.5C13 10 12 12 9.5 13V11.5L10.5 10H9Z"/>`)}</button>
      <button aria-label="语音">${icon(14, svg`<rect x="4" y="-1" width="6" height="10" rx="3"/><path fill="none" stroke="#0a6bd4" stroke-width="1.5" d="M2 6.5Q2.5 11 7 11T12 6.5M7 11V14M4 14H10"/>`)}</button>
      <button aria-label="键盘">${icon(15, svg`<rect y="2" width="15" height="12" rx="1.5"/><path class="k" stroke-width="1.5" stroke-dasharray="2 1.5" d="M2.5 5.5H13M2.5 8.3H13"/><path class="k" d="M4 11.5H11"/>`)}</button>
      <button aria-label="皮肤">${icon(15, svg`<path d="M4 1Q7.5 4 11 1L15 4 13 7.5 11.5 6.8V14H3.5V6.8L2 7.5 0 4Z"/>`)}</button>
      <button aria-label="游戏">${icon(16, svg`<ellipse cx="8" cy="9" rx="8" ry="5.5"/><rect x="7" y="1" width="2" height="5"/><path class="k" stroke-width="1.5" d="M3 9H7M5 7V11"/><circle cx="11.2" cy="9" r="1.6" fill="#fff"/>`)}</button>
      <button aria-label="工具箱">${icon(14, svg`<rect width="6" height="6" rx="1.5"/><circle cx="10.5" cy="3" r="2.2" fill="none" stroke="#0a6bd4" stroke-width="1.8"/><rect y="8" width="6" height="6" rx="1.5"/><rect x="8" y="8" width="6" height="6" rx="1.5"/>`)}</button>
      <button aria-label="设置">${icon(14, svg`<circle cx="7" cy="7" r="5.5"/><path fill="none" stroke="#0a6bd4" stroke-width="2" stroke-dasharray="3 1.9" d="M7 1A6 6 0 1 1 6.9 1"/><circle cx="7" cy="6" r="2" fill="#fff"/><path class="k" stroke-width="1.5" d="M7 7V12"/>`)}</button>`;
  }
}

@customElement("app-root")
class AppRoot extends LitElement {
  static styles = [shared, css`
    :host { display: block; }
    .app { position: relative; display: flex; flex-direction: column; height: 100vh; overflow: hidden; background: linear-gradient(100deg, #e6eaed, #e6e8ed 40%, #e4e5ea); }
    .body { display: flex; flex: 1; min-height: 0; }
    .main { flex: 1; min-width: 0; display: flex; flex-direction: column; }
    .taskbar { height: 7px; background: linear-gradient(90deg, #1f3a44, #1e2a42); display: flex; justify-content: center; }
    .task { width: 160px; background: #4c5c66; margin-right: 240px; }
    .tag { position: absolute; left: 770px; bottom: 39px; width: 604px; height: 145px; background: rgba(255, 255, 255, .6); display: flex; justify-content: space-between; padding: 0 10px 0 14px; }
    .words { display: flex; flex-direction: column; }
    .cn { font: 700 64px/76px "Noto Sans CJK SC", sans-serif; color: #ff2b2b; white-space: nowrap; }
    .url { font: 48px/72px "Liberation Serif", serif; color: #2b7bff; -webkit-text-stroke: 2px #2b7bff; }
    .logo { width: 241px; border-radius: 34px; background: rgba(30, 118, 255, .93); color: #fff; font: 700 118px/120px "Noto Sans CJK SC", sans-serif; text-align: center; }
    .ime { position: absolute; left: 934px; bottom: 9px; }
    .jg { position: absolute; right: 11px; bottom: 9px; display: flex; gap: 2px; opacity: .8; }
    .jg .cn2 { font: 700 21px/24px "Noto Sans CJK SC", sans-serif; color: #4a90d0; white-space: nowrap; }
    .jg .en { font: 700 16px/18px "Liberation Sans", sans-serif; color: #4cc06c; }
  `];
  render() {
    return html`<div class="app">
      <title-bar></title-bar>
      <menu-bar></menu-bar>
      <ribbon-bar></ribbon-bar>
      <div class="body">
        <div class="main">
          <formula-bar></formula-bar>
          <sheet-grid></sheet-grid>
          <sheet-tabs></sheet-tabs>
        </div>
        <pivot-panel></pivot-panel>
        <side-rail></side-rail>
      </div>
      <status-bar></status-bar>
      <div class="taskbar"><span class="task"></span></div>
      <div class="tag">
        <div class="words"><span class="cn">电脑技术网</span><span class="url">www.tagxp.com</span></div>
        <div class="logo">TAG</div>
      </div>
      <ime-bar class="ime"></ime-bar>
      <div class="jg">
        <svg width="42" height="40" viewBox="0 0 42 40" aria-hidden="true">
          <defs><linearGradient id="sky" x1="0" y1="1" x2="1" y2="0"><stop offset="0" stop-color="#2f6fd0"/><stop offset="1" stop-color="#5cc4f0"/></linearGradient></defs>
          <path fill="url(#sky)" d="M42 0C26 0 2 10 0 25C0 31 4 33 8 34C4 28 8 16 20 9C27 4 34 2 42 0Z"/>
          <path fill="#3f83dc" d="M33 6C22 8 13 15 12 22C12 27 18 29 22 27C18 26 17 23 19 19C21 14 27 9 33 6Z"/>
          <path fill="#4cc06c" d="M26 15C35 12 42 17 40 25C38 33 26 39 8 37C22 36 31 31 32 24C33 19 30 16 26 15Z"/>
          <path fill="#e3d94a" d="M3 38C14 37 24 34 29 29C24 38 12 41 3 38Z"/>
        </svg>
        <div class="words"><span class="cn2">极光下载站</span><span class="en">www.xz7.com</span></div>
      </div>
    </div>`;
  }
}
